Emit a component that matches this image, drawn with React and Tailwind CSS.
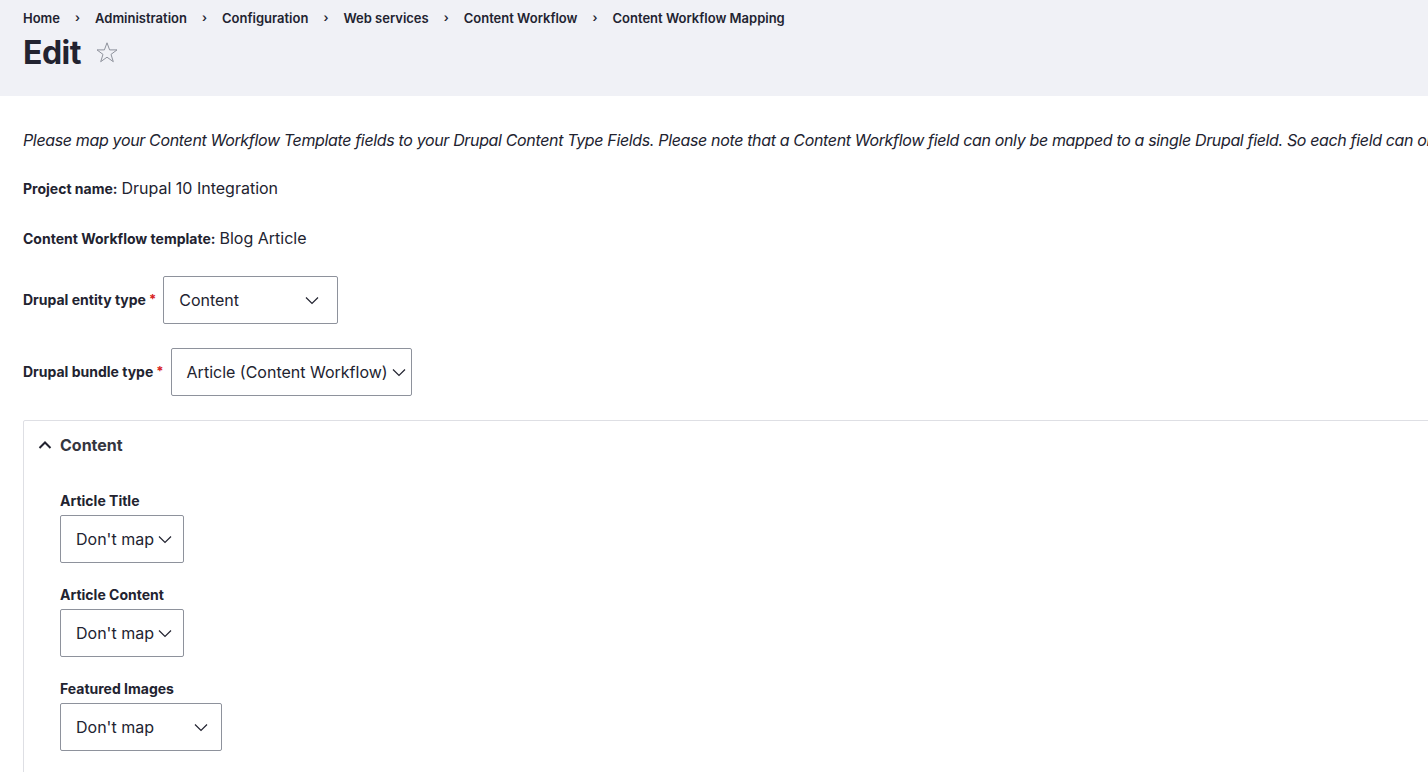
import { Fragment } from "react";

const crumbs = [
  "Home",
  "Administration",
  "Configuration",
  "Web services",
  "Content Workflow",
  "Content Workflow Mapping",
];

function Chevron({ className = "" }) {
  return (
    <svg width="14" height="9" viewBox="0 0 14 9" fill="none" className={className}>
      <path d="M1 1.5l6 6 6-6" stroke="#222330" strokeWidth="1.2" />
    </svg>
  );
}

function FakeSelect({ value, width, gap }) {
  return (
    <div
      className={`flex h-12 items-center rounded-[2px] border border-[#8e929c] bg-white pl-[15px] text-base text-[#222330] ${width}`}
    >
      <span className="whitespace-nowrap">{value}</span>
      <Chevron className={`shrink-0 ${gap}`} />
    </div>
  );
}

function Required() {
  return <span className="ml-[3px] text-[13px] font-bold text-[#d72222]">*</span>;
}

export default function App() {
  return (
    <div
      className="min-h-screen w-full overflow-hidden bg-white text-[#222330]"
      style={{ fontFamily: "Inter, 'Noto Sans', sans-serif" }}
    >
      {/* Page header */}
      <div className="h-24 bg-[#f0f1f6] px-[23px] pt-[10px]">
        <nav className="flex items-center text-[13px] font-semibold leading-4">
          {crumbs.map((c, i) => (
            <Fragment key={c}>
              {i > 0 && <span className="mx-[15px] text-[12px]">›</span>}
              <span>{c}</span>
            </Fragment>
          ))}
        </nav>
        <div className="mt-[7px] flex items-center gap-[14px]">
          <h1 className="text-[32px] font-bold leading-10 tracking-[-0.5px]">Edit</h1>
          <svg width="24" height="24" viewBox="0 0 24 24" fill="none">
            <path
              d="M12 1.8l2.6 7.1h7.4l-6 4.5 2.3 7.3L12 16.2l-6.3 4.5 2.3-7.3-6-4.5h7.4z"
              stroke="#8e929c"
              strokeWidth="1"
              strokeLinejoin="round"
            />
          </svg>
        </div>
      </div>

      {/* Form */}
      <div className="px-[23px] pt-[32px]">
        <p className="whitespace-nowrap text-base italic leading-6 tracking-[-0.35px]">
          Please map your Content Workflow Template fields to your Drupal Content Type Fields. Please note that a
          Content Workflow field can only be mapped to a single Drupal field. So each field can only be mapped once.
        </p>

        <div className="mt-[24px] flex items-baseline gap-1 leading-6">
          <span className="text-sm font-bold">Project name:</span>
          <span className="text-base">Drupal 10 Integration</span>
        </div>
        <div className="mt-[26px] flex items-baseline gap-1 leading-6">
          <span className="text-sm font-bold">Content Workflow template:</span>
          <span className="text-base">Blog Article</span>
        </div>

        <div className="mt-[26px] flex items-center">
          <span className="text-sm font-bold">Drupal entity type</span>
          <Required />
          <div className="ml-[7px]">
            <FakeSelect value="Content" width="w-[175px]" gap="ml-[66px]" />
          </div>
        </div>

        <div className="mt-6 flex items-center">
          <span className="text-sm font-bold">Drupal bundle type</span>
          <Required />
          <div className="ml-[7px]">
            <FakeSelect value="Article (Content Workflow)" width="w-[241px]" gap="ml-[4px]" />
          </div>
        </div>

        {/* Details */}
        <div className="mt-6 w-[1460px] rounded-t-[2px] border border-[#dedfe4] pb-6">
          <div className="flex h-12 items-center gap-[8px] pl-[14px]">
            <svg width="14" height="10" viewBox="0 0 14 10" fill="none">
              <path d="M1.5 8l5.5-5.5L12.5 8" stroke="#222330" strokeWidth="2" />
            </svg>
            <span className="text-base font-bold text-[#35363f]">Content</span>
          </div>

          <div className="flex flex-col gap-6 pl-[36px] pt-[24px]">
            <div>
              <div className="mb-[6px] text-sm font-bold leading-4">Article Title</div>
              <FakeSelect value="Don't map" width="w-[124px]" gap="ml-[4px]" />
            </div>
            <div>
              <div className="mb-[6px] text-sm font-bold leading-4">Article Content</div>
              <FakeSelect value="Don't map" width="w-[124px]" gap="ml-[4px]" />
            </div>
            <div>
              <div className="mb-[6px] text-sm font-bold leading-4">Featured Images</div>
              <FakeSelect value="Don't map" width="w-[162px]" gap="ml-[40px]" />
            </div>
          </div>
        </div>
      </div>
    </div>
  );
}
